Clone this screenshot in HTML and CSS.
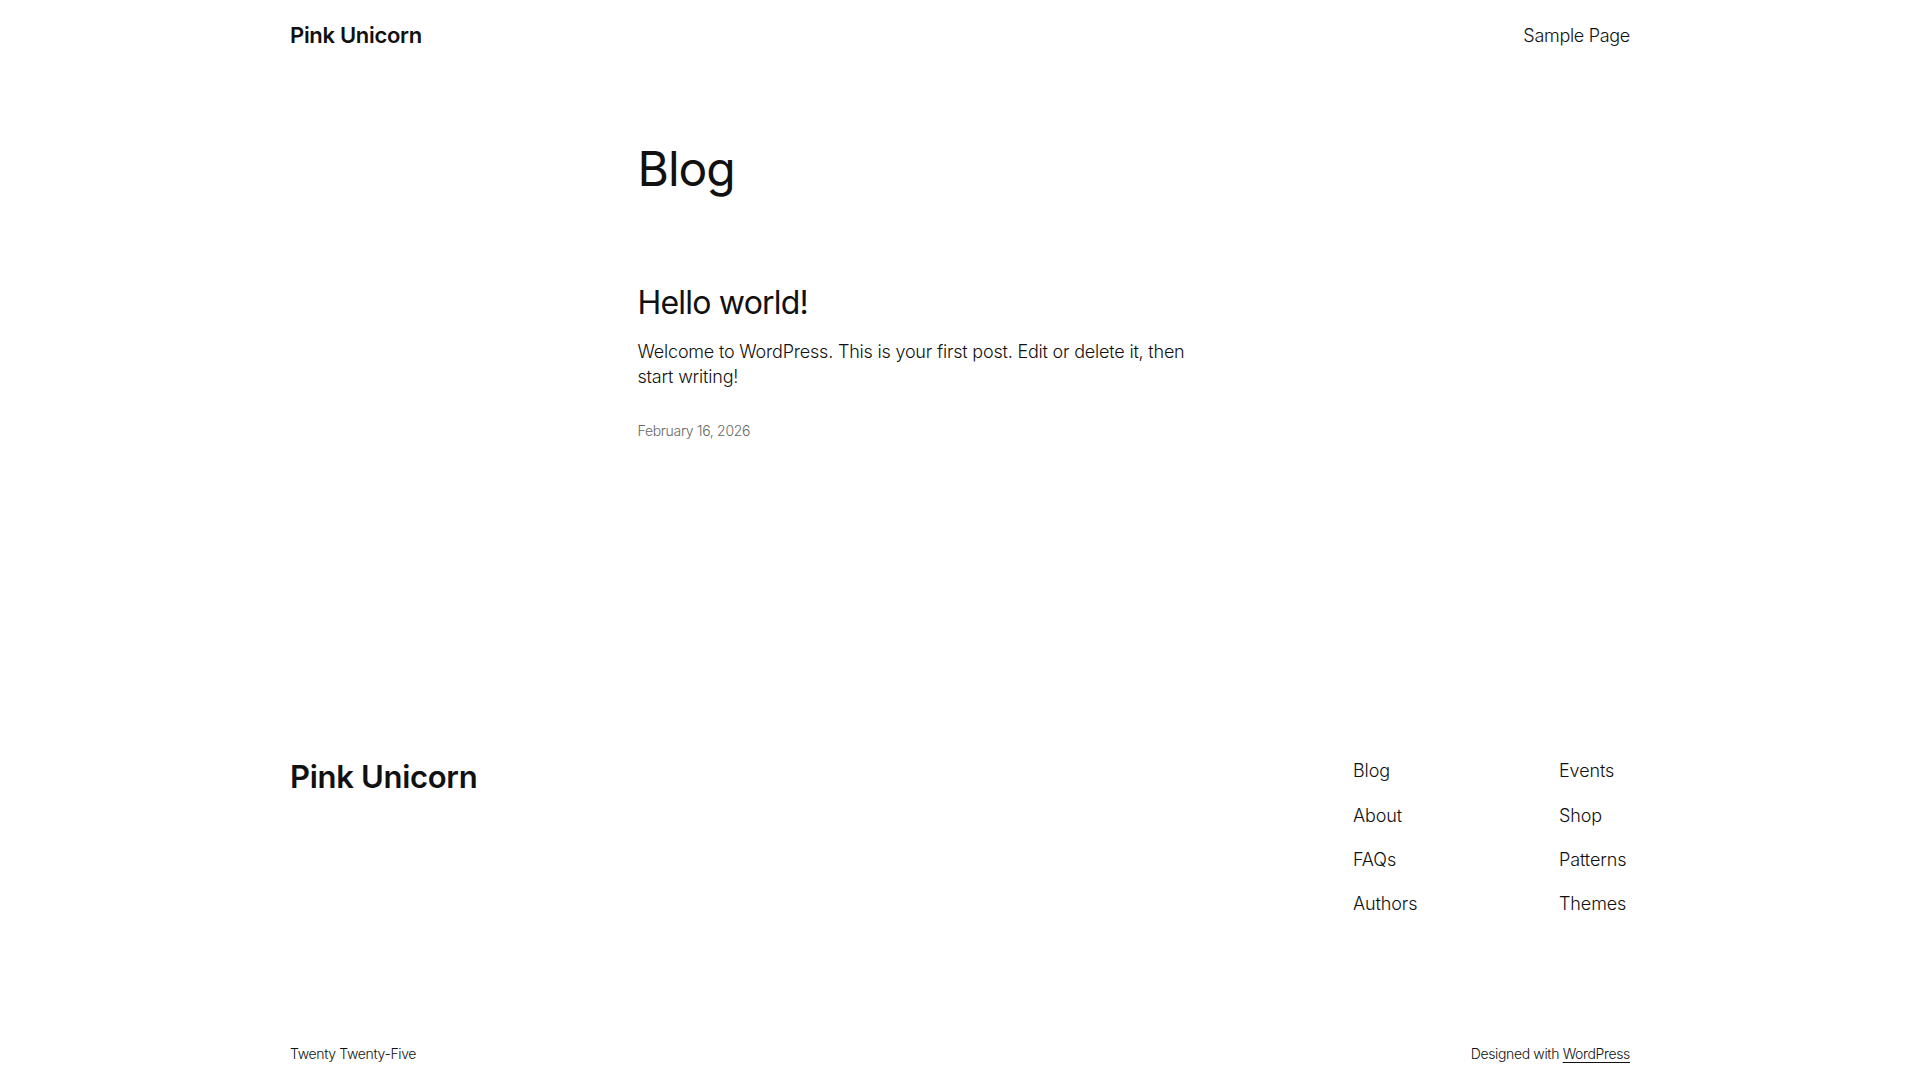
FILE: index.html
```html
<!DOCTYPE html>
<html lang="en">
<head>
<meta charset="utf-8">
<title>Blog – Pink Unicorn</title>
<link rel="stylesheet" href="styles.css">
</head>
<body>
<div class="site">
  <header class="site-header">
    <div class="wide row">
      <a class="site-title" href="#">Pink Unicorn</a>
      <nav class="header-nav"><a href="#">Sample Page</a></nav>
    </div>
  </header>

  <main class="site-main">
    <div class="content">
      <h1 class="page-title">Blog</h1>
      <article class="post">
        <h2 class="post-title"><a href="#">Hello world!</a></h2>
        <p class="post-excerpt">Welcome to WordPress. This is your first post. Edit or delete it, then start writing!</p>
        <div class="post-date">February 16, 2026</div>
      </article>
    </div>
  </main>

  <footer class="site-footer">
    <div class="wide footer-top">
      <a class="footer-title" href="#">Pink Unicorn</a>
      <div class="footer-navs">
        <ul class="footer-nav">
          <li><a href="#">Blog</a></li>
          <li><a href="#">About</a></li>
          <li><a href="#">FAQs</a></li>
          <li><a href="#">Authors</a></li>
        </ul>
        <ul class="footer-nav">
          <li><a href="#">Events</a></li>
          <li><a href="#">Shop</a></li>
          <li><a href="#">Patterns</a></li>
          <li><a href="#">Themes</a></li>
        </ul>
      </div>
    </div>
    <div class="wide footer-bottom">
      <span>Twenty Twenty-Five</span>
      <span>Designed with <a class="credit-link" href="#">WordPress</a></span>
    </div>
  </footer>
</div>
</body>
</html>
```

FILE: styles.css
```css
* { box-sizing: border-box; }

html, body {
  margin: 0;
  padding: 0;
  background: #ffffff;
}

body {
  font-family: Inter, "Noto Sans", "Liberation Sans", sans-serif;
  color: #111111;
  font-size: 18px;
  line-height: 1.4;
  letter-spacing: -0.1px;
  -webkit-font-smoothing: antialiased;
}

a {
  color: inherit;
  text-decoration: none;
}

.wide {
  width: 1340px;
  margin: 0 auto;
}

.content {
  width: 645px;
  margin: 0 auto;
}

/* Header */
.site-header {
  padding: 20px 0;
}

.row {
  display: flex;
  align-items: center;
  justify-content: space-between;
}

.site-title {
  font-size: 22px;
  font-weight: 600;
  line-height: 1.4;
  letter-spacing: -0.3px;
}

.header-nav {
  font-size: 18px;
  font-weight: 300;
  line-height: 1.4;
  letter-spacing: -0.3px;
}

/* Main */
.site-main {
  padding-top: 71px;
  padding-bottom: 318px;
}

.page-title {
  margin: 0;
  font-size: 48px;
  font-weight: 400;
  line-height: 1.125;
  letter-spacing: -1px;
}

.post {
  margin-top: 89px;
  display: flex;
  flex-direction: column;
}

.post-title {
  margin: 0;
  font-size: 32px;
  font-weight: 400;
  line-height: 1.125;
  letter-spacing: -0.8px;
}

.post-excerpt {
  margin: 18.5px 0 0;
  max-width: 560px;
  font-size: 18px;
  font-weight: 300;
  line-height: 1.4;
  letter-spacing: -0.2px;
}

.post-date {
  margin-top: 31px;
  font-size: 14px;
  font-weight: 300;
  line-height: 1.4;
  letter-spacing: -0.3px;
  color: #686868;
}

/* Footer */
.footer-top {
  display: flex;
  justify-content: space-between;
  align-items: flex-start;
}

.footer-title {
  font-size: 31px;
  font-weight: 600;
  line-height: 1.2;
  letter-spacing: -0.3px;
}

.footer-navs {
  display: grid;
  grid-template-columns: 206px 71px;
}

.footer-nav {
  list-style: none;
  margin: 0;
  padding: 0;
  display: flex;
  flex-direction: column;
  gap: 19.2px;
  font-size: 18px;
  font-weight: 300;
  line-height: 1.4;
  letter-spacing: -0.1px;
}

.footer-bottom {
  display: flex;
  justify-content: space-between;
  align-items: center;
  margin-top: 127.5px;
  padding-bottom: 16px;
  font-size: 14px;
  line-height: 1.4;
  font-weight: 300;
  letter-spacing: -0.35px;
}

.credit-link {
  text-decoration: underline;
  text-underline-offset: 3px;
}
```
